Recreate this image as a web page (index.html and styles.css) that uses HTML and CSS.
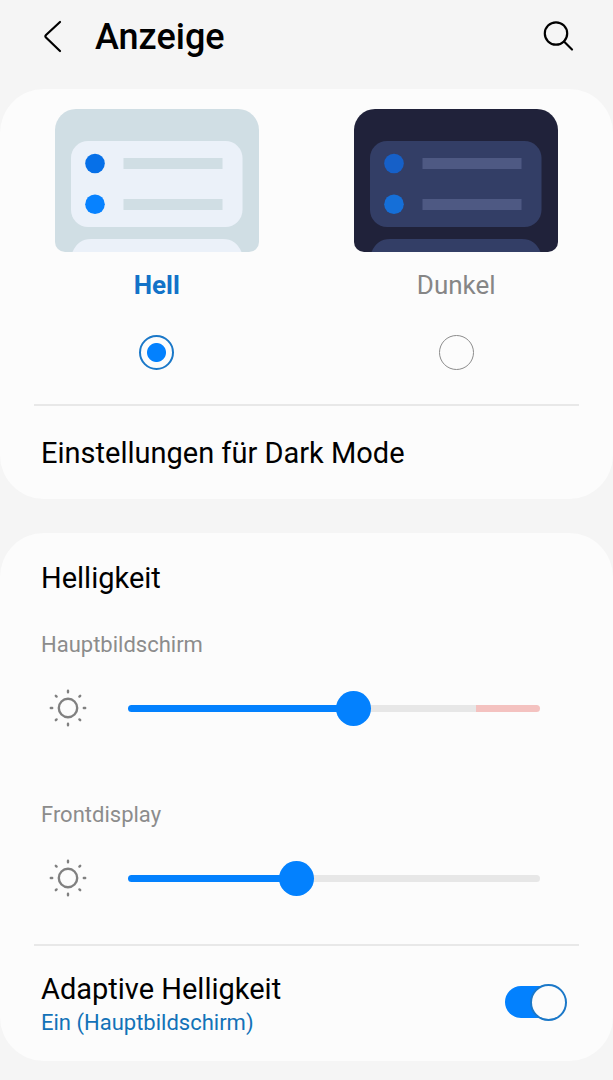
FILE: index.html
```html
<!DOCTYPE html>
<html lang="de">
<head>
  <meta charset="UTF-8" />
  <meta name="viewport" content="width=device-width, initial-scale=1" />
  <title>Anzeige</title>
  <link rel="stylesheet" href="styles.css">
</head>
<body>
  <header class="topbar">
    <button class="icon-btn" type="button" aria-label="Zurück">
      <svg width="36" height="36" viewBox="0 0 36 36"><path d="M25 3 L11 16 Q9.800 17.300 11 18.600 L25 32" /></svg>
    </button>
    <h1>Anzeige</h1>
    <button class="icon-btn" type="button" aria-label="Suchen">
      <svg width="36" height="36" viewBox="0 0 36 36"><circle cx="16" cy="14.500" r="11.200" /><path d="M24 22.500 L32 30.500" /></svg>
    </button>
  </header>

  <main>
    <section class="card">
      <div class="themes">
        <label class="theme light">
          <svg class="preview" width="204" height="143" viewBox="0 0 204 143">
            <path class="bg" d="M21 0 H183 A21 21 0 0 1 204 21 V133 A10 10 0 0 1 194 143 H10 A10 10 0 0 1 0 133 V21 A21 21 0 0 1 21 0 Z" />
            <rect class="panel" x="16" y="32" width="171.500" height="86" rx="17" />
            <path class="panel" d="M17.500 143 Q23 130 36 130 H168 Q181 130 186.500 143 Z" />
            <circle class="dot-1" cx="40" cy="54.500" r="9.800" />
            <circle class="dot-2" cx="40" cy="95.300" r="9.800" />
            <rect class="line" x="68.500" y="49" width="99" height="11" />
            <rect class="line" x="68.500" y="90" width="99" height="11" />
          </svg>
          <span class="theme-name">Hell</span>
          <input type="radio" name="theme" checked />
        </label>
        <label class="theme dark">
          <svg class="preview" width="204" height="143" viewBox="0 0 204 143">
            <path class="bg" d="M21 0 H183 A21 21 0 0 1 204 21 V133 A10 10 0 0 1 194 143 H10 A10 10 0 0 1 0 133 V21 A21 21 0 0 1 21 0 Z" />
            <rect class="panel" x="16" y="32" width="171.500" height="86" rx="17" />
            <path class="panel" d="M17.500 143 Q23 130 36 130 H168 Q181 130 186.500 143 Z" />
            <circle class="dot-1" cx="40" cy="54.500" r="9.800" />
            <circle class="dot-2" cx="40" cy="95.300" r="9.800" />
            <rect class="line" x="68.500" y="49" width="99" height="11" />
            <rect class="line" x="68.500" y="90" width="99" height="11" />
          </svg>
          <span class="theme-name">Dunkel</span>
          <input type="radio" name="theme" />
        </label>
      </div>
      <hr />
      <a class="link-row" href="#">Einstellungen für Dark Mode</a>
    </section>

    <section class="card brightness">
      <h2>Helligkeit</h2>

      <div class="level">
        <label for="main-screen">Hauptbildschirm</label>
        <div class="slider-row">
          <svg class="sun" width="40" height="40" viewBox="0 0 40 40">
            <circle cx="20" cy="20" r="9.200" />
            <path d="M20 2.800v1.400M20 35.800v1.400M2.800 20h1.400M35.800 20h1.400M7.800 7.800l.8.800M31.400 31.400l.8.800M7.800 32.200l.8-.8M31.400 8.600l.8-.8" />
          </svg>
          <input class="with-limit" type="range" id="main-screen" min="0" max="255" value="141" style="--fill: 55%" />
        </div>
      </div>

      <div class="level">
        <label for="front-screen">Frontdisplay</label>
        <div class="slider-row">
          <svg class="sun" width="40" height="40" viewBox="0 0 40 40">
            <circle cx="20" cy="20" r="9.200" />
            <path d="M20 2.800v1.400M20 35.800v1.400M2.800 20h1.400M35.800 20h1.400M7.800 7.800l.8.800M31.400 31.400l.8.800M7.800 32.200l.8-.8M31.400 8.600l.8-.8" />
          </svg>
          <input type="range" id="front-screen" min="0" max="255" value="102" style="--fill: 41%" />
        </div>
      </div>

      <hr />
      <label class="switch-row">
        <span class="switch-text">
          <span class="switch-title">Adaptive Helligkeit</span>
          <span class="switch-state">Ein (Hauptbildschirm)</span>
        </span>
        <input class="switch" type="checkbox" role="switch" checked />
      </label>
    </section>
  </main>

  <script>
    // keep the blue part of the track under the thumb
    document.querySelectorAll('input[type="range"]').forEach(function (slider) {
      slider.addEventListener('input', function () {
        slider.style.setProperty('--fill', (slider.value / slider.max * 100) + '%');
      });
    });
  </script>
</body>
</html>
```

FILE: styles.css
```css
* {
  box-sizing: border-box;
}
body {
  font-family: Roboto, sans-serif;
  background: #f5f5f5;
  margin: 0;
  color: #000;
}

/* Header */
.topbar {
  display: flex;
  align-items: center;
  padding: 15px 37px 30px 35px;
}
.topbar h1 {
  flex: 1;
  margin: 0 0 0 24px;
  font-size: 36px;
  font-weight: 500;
  line-height: 44px;
}
.icon-btn {
  display: flex;
  padding: 0;
  border: none;
  background: none;
  cursor: pointer;
}
.icon-btn svg {
  fill: none;
  stroke: #000;
  stroke-width: 2.2;
  stroke-linecap: round;
}

/* Cards */
.card {
  background: #fcfcfc;
  border-radius: 44px;
  padding-top: 20px;
  margin-bottom: 34px;
}
hr {
  height: 2px;
  margin: 0 34px;
  border: none;
  background: #e8e8e8;
}

/* Light / dark choice */
.themes {
  display: grid;
  grid-template-columns: 1fr 1fr;
  padding: 0 7px 34px;
}
.theme {
  display: flex;
  flex-direction: column;
  align-items: center;
  cursor: pointer;
}
.theme-name {
  margin: 17px 0 34px;
  font-size: 26px;
  line-height: 32px;
  color: #868686;
}
.light .theme-name {
  font-weight: 700;
  color: #1272c8;
}
.light .bg,
.light .line {
  fill: #d0dee4;
}
.light .panel {
  fill: #ebf1f9;
}
.light .dot-1 {
  fill: #0670e8;
}
.light .dot-2 {
  fill: #0782ff;
}
.dark .bg {
  fill: #20223a;
}
.dark .panel {
  fill: #333e66;
}
.dark .line {
  fill: #4e5983;
}
.dark .dot-1 {
  fill: #1660c8;
}
.dark .dot-2 {
  fill: #156fd8;
}
.theme input {
  appearance: none;
  width: 35px;
  height: 35px;
  margin: 0;
  border: 1px solid #8c8c8c;
  border-radius: 50%;
}
.theme input:checked {
  border: 2px solid #1b78c8;
  background: radial-gradient(circle, #0381fe 9px, transparent 10px);
}
.link-row {
  display: block;
  padding: 29px 41px 28px;
  font-size: 29px;
  line-height: 36px;
  color: #000;
  text-decoration: none;
}

/* Brightness */
.brightness {
  padding-top: 27px;
  margin-bottom: 19px;
}
.brightness h2 {
  margin: 0 41px 35px;
  font-size: 29px;
  font-weight: 400;
  line-height: 36px;
}
.level {
  padding: 0 73px 0 41px;
  margin-bottom: 73px;
}
.level + hr {
  margin-top: -27px;
}
.level label {
  display: block;
  margin-bottom: 29px;
  font-size: 22px;
  line-height: 28px;
  color: #8c8c8c;
}
.slider-row {
  display: flex;
  align-items: center;
  gap: 40px;
  padding-left: 7px;
}
.sun {
  flex: none;
  fill: none;
  stroke: #808080;
  stroke-width: 2.4;
  stroke-linecap: round;
}
input[type="range"] {
  --rest: #e7e7e7;
  appearance: none;
  flex: 1;
  min-width: 0;
  height: 35px;
  margin: 0;
  background: none;
}
input[type="range"].with-limit {
  --rest: #e7e7e7 84.5%, #f4c2c0 84.5%;
}
input[type="range"]::-webkit-slider-runnable-track {
  height: 7px;
  border-radius: 4px;
  background: linear-gradient(to right, #0381fe var(--fill), #e7e7e7 var(--fill), var(--rest));
}
input[type="range"]::-webkit-slider-thumb {
  appearance: none;
  width: 35px;
  height: 35px;
  margin-top: -14px;
  border-radius: 50%;
  background: #0381fe;
}

/* Adaptive brightness */
.switch-row {
  display: flex;
  justify-content: space-between;
  align-items: flex-start;
  padding: 25px 46px 24px 41px;
  cursor: pointer;
}
.switch-text {
  display: flex;
  flex-direction: column;
  gap: 2px;
}
.switch-title {
  font-size: 29px;
  line-height: 36px;
}
.switch-state {
  font-size: 22px;
  line-height: 28px;
  color: #1272b8;
}
.switch {
  appearance: none;
  display: flex;
  align-items: center;
  width: 62px;
  height: 38px;
  margin: 12px 0 0;
}
.switch::before {
  content: "";
  width: 56px;
  height: 32px;
  border-radius: 16px;
  background: #b8b8b8;
}
.switch::after {
  content: "";
  box-sizing: border-box;
  flex: none;
  width: 37px;
  height: 37px;
  margin-left: -56px;
  border: 2px solid #8c8c8c;
  border-radius: 50%;
  background: #fcfcfc;
}
.switch:checked::before {
  background: #0381fe;
}
.switch:checked::after {
  margin-left: -31px;
  border-color: #1b78c8;
}
```
